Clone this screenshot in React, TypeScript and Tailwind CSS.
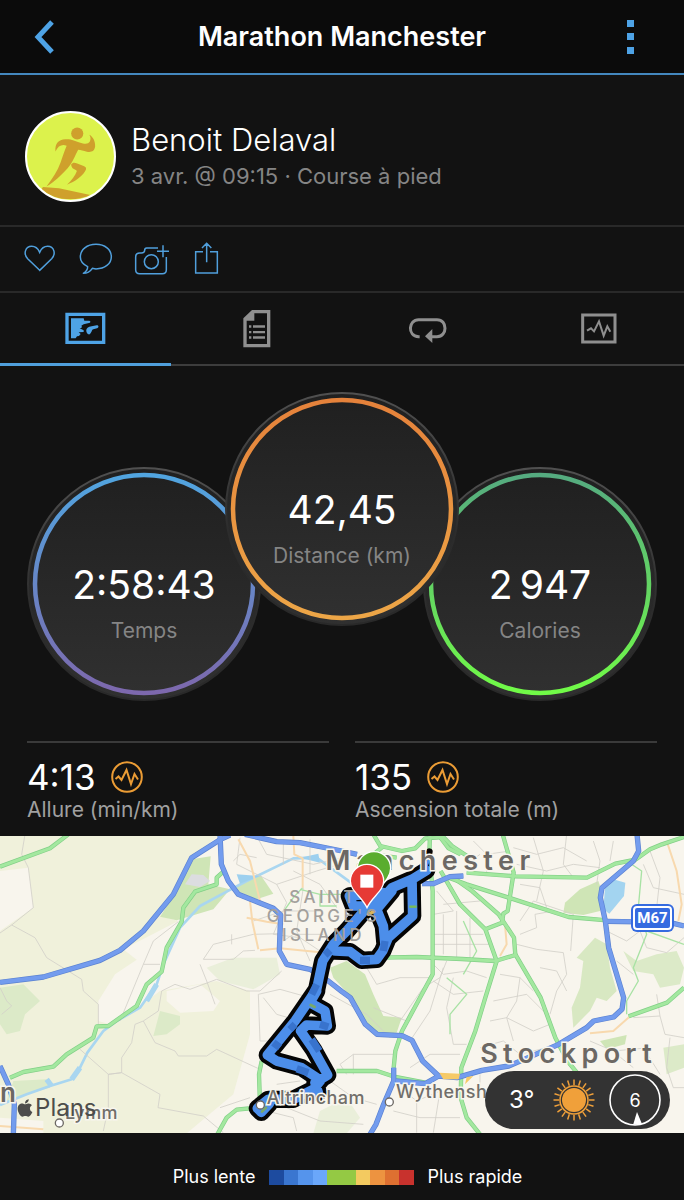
import React, { useState } from 'react';
import { FaApple } from 'react-icons/fa';

type Gauge = {
  id: string;
  value: string;
  label: string;
  from: string;
  to: string;
  place: string;
};

const gauges: Gauge[] = [
  { id: 'time', value: '2:58:43', label: 'Temps', from: '#51a5e0', to: '#7d68ad', place: 'mt-[75px]' },
  { id: 'distance', value: '42,45', label: 'Distance (km)', from: '#e5823b', to: '#eda647', place: 'z-10 -mx-[34px]' },
  { id: 'calories', value: '2\u202f947', label: 'Calories', from: '#55ab80', to: '#71fb47', place: 'mt-[75px]' },
];

const stats = [
  { value: '4:13', label: 'Allure (min/km)' },
  { value: '135', label: 'Ascension totale (m)' },
];

const paceColors = [
  'bg-[#1d4b9f]', 'bg-[#3a76d0]', 'bg-[#5594ec]', 'bg-[#6aa7fa]', 'bg-[#94c944]',
  'bg-[#94c944]', 'bg-[#f3ca60]', 'bg-[#ed9340]', 'bg-[#de7031]', 'bg-[#c8322d]',
];

const motorways = [
  'M0 444L130 428L300 378L360 348L430 290L520 180L575 70L660 16L690 2',
  'M660 0L664 90L685 140L715 180L820 222L842 242L838 350L860 390L930 405L985 440L1026 472L1051 490L1096 570L1131 600L1206 604L1236 618L1268 680L1316 725',
  'M735 0L830 22L900 25L1026 50L1071 60',
  'M1266 148L1301 148L1350 127L1390 125',
  'M1911 0L1916 50L1900 80L1806 160L1801 190L1816 260L1826 340L1871 490L1866 525L1841 548L1781 560L1760 580L1676 630L1526 695L1446 708L1371 730L1316 725L1276 748L1188 740',
  'M1821 261L2008 264L2052 275',
  'M1181 700L1181 740L1151 810L1128 870L1110 900',
  'M0 695L25 750L43 810L40 900',
];

const mainRoads = [
  'M0 97L150 42L205 0',
  'M30 730L70 713L160 697L200 660L280 610L290 576L325 575L410 515L440 450L485 412L500 340L545 262L550 220L585 172L650 150L650 130L672 110',
  'M785 680L777 720L780 810',
  'M770 820L710 826L680 850L652 900',
  'M1010 710L1131 710L1186 728L1276 745',
  'M1290 0L1288 60L1298 170L1298 420L1206 590L1186 650L1181 700',
  'M1140 370L1250 368L1386 374L1486 380L1546 362L1542 310L1496 240L1416 170L1360 130',
  'M1322 110L1380 210L1456 285L1490 380L1456 490L1426 590L1384 700L1382 790L1400 850L1440 900',
  'M1546 360L1622 490L1666 610L1702 680L1735 720',
  'M1456 285L1506 265L1510 238L1523 230L1541 115L1508 0',
  'M1346 130L1400 150L1526 190L1706 248L1821 258',
  'M1400 115L1546 126L1761 130L1846 88L1906 76L1950 45L1986 30L2052 8',
  'M1886 546L2001 505L2052 460',
  'M1120 0L1141 35L1206 50L1246 42L1276 12L1330 8L1356 35L1406 68',
  'M1150 36L1120 60L1190 70',
  'M1320 8L1346 42L1382 60',
];

const orangeRoads = [
  'M715 15L750 80L780 200L750 200L757 262L775 345',
  'M740 250L800 262L850 270',
  'M780 348L840 342L960 354',
  'M880 5L883 60L908 72L908 160',
  'M1500 365L1520 330L1515 270',
  'M2000 20L2030 110L2045 210L2035 260',
  'M1770 597L1840 590L1890 546',
  'M0 875L130 885',
];

const lanes = [
  'M75 0L65 60L85 100L100 220L35 272L0 296',
  'M35 272L105 310L140 370L245 435L250 470L295 510L295 575',
  'M0 460L20 500L35 515L5 540',
  'M535 262L460 320L430 390L360 560M430 390H480',
  'M430 560L405 570L395 625L365 670V715L325 720L240 645M325 720V820L310 890M325 720L365 715L480 780L474 820L610 845L670 895',
  'M430 560L475 530L485 470L525 450L570 465L650 435L740 470H780L845 410',
  'M430 560L465 625L525 650L535 665H620L650 645L780 705',
  'M610 375L640 330L760 300L840 298M610 375H700L730 350L765 348M600 390L620 440L645 510M695 330V300',
  'M775 480L780 620H830M775 480L840 465L930 490M790 490L830 540L900 560',
  'M720 10L710 90L830 150L950 110L1050 80M770 5L800 60L940 90L1030 70M830 150L860 205L820 300L900 310L960 350M700 80L720 60L770 70',
  'M850 20V90M930 15V120M880 110L960 150L1010 220M760 260L850 230L960 230M910 160L890 290L930 380M850 320L880 300L970 300',
  'M1040 720L1020 690L1060 660H1180M1060 660V720M1100 400L1130 450L1200 430H1290M1120 520L1220 560',
  'M830 750L900 740M660 820L750 790M800 830L880 850L890 890M860 820L960 860L1090 870M990 740L1060 790L1130 810',
  'M1310 170L1360 230L1300 240M1330 210L1440 200M1300 300H1450M1330 240V360M1370 230V370M1410 250V375M1300 330H1470',
  'M1300 390L1330 420L1400 410L1460 430M1340 380L1320 430L1270 460L1200 560M1360 430L1340 520L1360 630H1400M1300 440L1360 480L1450 470M1230 620L1290 530L1330 400',
  'M1500 420L1560 430L1600 470M1480 500L1580 480L1640 540M1470 560L1520 550L1600 590L1650 570M1440 640L1510 620L1560 660L1640 640M1560 430L1550 500L1520 550L1540 620',
  'M1560 300L1610 280L1605 240L1660 230M1550 330L1610 345L1690 355L1700 420L1670 470L1650 540M1560 260L1600 200L1720 240L1712 350M1620 400L1670 410L1700 470',
  'M1540 40L1610 60L1690 40L1760 80M1550 90L1640 110L1720 90L1800 100M1600 10L1630 110L1610 200M1700 0L1690 90L1720 130M1560 150L1620 160L1640 220M1420 20L1460 60L1530 50M1400 90L1440 60M1460 60V120',
  'M1780 20L1800 80L1790 150M1840 20L1830 80M1930 90L1960 160L2052 180M1950 50L1980 130L1970 220M1820 290L1880 320L1920 290L1940 340L2000 355L2052 310M1850 380L1900 420',
  'M1900 550L1980 545L1995 600L2052 610M1980 545L1970 480M2010 610L2000 700L2020 760H2052M1770 620L1840 650L1950 640M1930 640L1980 720M1850 660L1900 700',
  'M1200 760L1250 800L1320 770L1390 780M1180 830L1260 850L1380 850M1250 800V895M1320 770L1300 895M1440 720L1440 780M1230 700L1290 660L1380 660M1170 610L1100 540L990 480',
];

const minorGreen = [
  'M908 160L880 190L855 225',
  'M900 165L960 180L1026 180M960 180V215H1010',
  'M1340 430L1400 480L1350 540L1350 600M1390 260L1430 350L1390 420',
  'M1880 80L1925 110L1915 220L1940 300L1900 400L1915 440L1880 500V540',
  'M1940 290L2052 330',
];

const route =
  'M1280 108L1236 135L1176 160L1145 195L1105 215L1040 290L1000 330L968 380L950 465L885 560L802 662L830 680L905 700L962 738L940 765L880 795L805 795L772 822L784 834L808 808' +
  'M1236 135L1238 245L1165 310L1148 350L1130 375L1085 378L1050 352L1005 350' +
  'M1176 170L1130 225L1150 275L1155 330M1110 215L1060 215L1048 185L1100 180L1150 175' +
  'M950 470L930 505L975 530L982 575L920 572L902 590L940 645L983 722L945 745L955 775';

const labelHalo = '[paint-order:stroke_fill] [-webkit-text-stroke:3px_#f8f6ee]';

function RunnerAvatar() {
  return (
    <svg viewBox="30 32 272 272" className="size-[91px] shrink-0 rounded-full border-2 border-white bg-[#dcf24c]" role="img" aria-label="Benoit Delaval">
      <g fill="#cfa02c">
        <circle cx="187" cy="96" r="19" />
        <path d="M119 152C117 128 128 115 150 114C170 113 181 120 194 124C210 129 221 130 226 122C231 112 228 106 225 100C236 106 244 120 243 137C241 152 230 156 217 153C207 151 198 147 190 147C180 165 173 187 157 205C138 226 115 248 91 262C111 235 125 214 135 187C141 169 147 150 154 134C140 128 127 134 119 152Z" />
        <path d="M168 193C173 186 179 187 187 190L207 198C216 202 217 207 211 215C201 231 181 246 155 256C169 242 181 228 186 213C181 207 169 208 168 193Z" />
        <path d="M80 263L130 267L228 288C190 306 120 310 75 270Z" />
      </g>
    </svg>
  );
}

function PulseIcon() {
  return (
    <svg viewBox="0 0 32 32" className="size-8" fill="none" stroke="#eb9c35" aria-hidden="true">
      <circle cx="16" cy="16" r="14.8" strokeWidth="2" />
      <path d="M4.500 18L7.500 15.500L10.500 19L15.500 9L20 23L23.500 13L27 18.500" strokeWidth="2" strokeLinejoin="miter" />
    </svg>
  );
}

const actions = [
  {
    label: "J'aime",
    icon: (
      <svg viewBox="60 42 120 120" className="size-10" fill="none" stroke="currentColor" strokeWidth="4.500">
        <path d="M119 136L83 101C69 86 76 64 95 64C108 64 115 73 119 82C123 73 130 64 143 64C162 64 169 86 155 101Z" />
      </svg>
    ),
  },
  {
    label: 'Commenter',
    icon: (
      <svg viewBox="228 42 120 120" className="size-10" fill="none" stroke="currentColor" strokeWidth="4.500" strokeLinejoin="round">
        <path d="M263 125C249 118 241 108 241 96C241 74 261 58 288 58C315 58 334 74 334 95C334 117 314 131 288 132L277 130C271 139 263 145 250 145C259 139 263 133 263 125Z" />
      </svg>
    ),
  },
  {
    label: 'Ajouter une photo',
    icon: (
      <svg viewBox="396 42 120 120" className="size-10" fill="none" stroke="currentColor" strokeWidth="4.500">
        <path d="M474 69H440C436 69 434 73 434 76C434 82 431 84 424 84H419C411 84 407 89 407 96V134C407 142 412 146 419 146H487C495 146 499 141 499 134V96" />
        <circle cx="454" cy="110" r="21" />
        <path d="M489 61V97M471 79H507" />
      </svg>
    ),
  },
  {
    label: 'Partager',
    icon: (
      <svg viewBox="564 42 120 120" className="size-10" fill="none" stroke="currentColor" strokeWidth="4.500">
        <path d="M609 80H587V144H652V80H630M620 112V56M606 69L620 55L634 69" />
      </svg>
    ),
  },
];

const tabs = [
  {
    label: 'Carte',
    icon: (
      <svg viewBox="197 248 120 120" className="size-10 overflow-visible" fill="currentColor">
        <path fillRule="evenodd" d="M195 262H315V356H195ZM205 272V346H305V272Z" />
        <path d="M212 279H250L252 286H267C272 287 271 292 266 293L250 297L243 301C247 305 244 308 238 309L250 315V320L235 321L241 326L236 332L230 333L226 339H212Z" />
        <path d="M258 318C257 309 264 304 274 303L289 300C296 300 296 307 290 309L279 312C273 314 275 322 268 327C261 328 259 323 258 318Z" />
      </svg>
    ),
  },
  {
    label: 'Statistiques',
    icon: (
      <svg viewBox="710 248 120 120" className="size-10" fill="currentColor">
        <path fillRule="evenodd" d="M755 254H810V366H729V279ZM762 264V286H739V356H800V264Z" />
        <path d="M746 300H753V307H746ZM758 300H794V307H758ZM746 317H753V324H746ZM758 317H794V324H758ZM746 333H753V340H746ZM758 333H794V340H758Z" />
      </svg>
    ),
  },
  {
    label: 'Circuits',
    icon: (
      <svg viewBox="197 248 120 120" className="size-10" fill="none" stroke="currentColor" strokeWidth="9">
        <path d="M232 334H229C194 332 198 283 229 283H284C316 283 316 334 284 334H265" />
        <path d="M248 333L270 311V353Z" fill="currentColor" stroke="none" />
      </svg>
    ),
  },
  {
    label: 'Graphiques',
    icon: (
      <svg viewBox="710 248 120 120" className="size-10" fill="none" stroke="currentColor">
        <path d="M721 269H818V350H721Z" strokeWidth="9" />
        <path d="M734 316L746 309L755 318L770 288L784 331L795 303L804 319" strokeWidth="6" />
      </svg>
    ),
  },
];

function RouteMap() {
  return (
    <section aria-label="Carte du parcours" className="relative overflow-hidden bg-[#f8f5ed]">
      {/* Terrain, roads and track */}
      <svg viewBox="0 5 2052 892" className="block h-auto w-full" aria-hidden="true">
        <path d="M0 0H660L575 70L480 245L535 260L370 345L440 400L360 560L480 470L650 440L750 470L750 600L700 780L560 897H0Z" fill="#f0f1db" />
        <path d="M0 110L85 100L100 220L0 290ZM500 470L600 450L660 500L640 530L540 535L500 500ZM345 420L480 330L500 280L540 262L500 400L430 510L330 570L295 560V500ZM0 850L130 860V897H0Z" fill="#f8f5ed" />
        <g fill="#cfe5b6">
          <path d="M575 75L632 66L625 150L690 165L640 225L590 240L530 258L480 247L530 170Z" />
          <path d="M735 140L780 120L820 178L770 195L700 165Z" />
          <path d="M990 400L1040 380L1095 420L1120 480L1150 545L1205 550L1190 595L1130 600L1090 560L1055 490L1000 430Z" />
          <path d="M1695 205L1740 165L1795 140L1805 170L1800 230L1750 242L1690 235Z" />
          <path d="M1785 310L1820 330L1830 400L1850 470L1820 500L1790 490L1770 530L1720 580L1715 520L1740 460L1750 380L1730 370Z" opacity=".8" />
          <path d="M1800 620L1880 602L1875 630L1820 645Z" />
        </g>
        <g fill="#dceac8">
          <path d="M480 530L540 545L540 570L500 600L460 605Z" />
          <path d="M0 460L70 450L120 500L75 540L60 590L20 600L0 570Z" />
          <path d="M40 740L140 735L150 760L80 780L20 800Z" />
          <path d="M620 400L700 370L830 370L840 420L760 465L660 440Z" opacity=".5" />
          <path d="M1870 350L1910 380L1970 360L2030 350L2052 400L2040 450L1980 460L1960 420L1900 410Z" />
          <path d="M1990 640L2052 630V700L2000 720Z" />
          <path d="M960 830L1040 790L1080 850L1040 897H940Z" opacity=".5" />
        </g>
        <path d="M555 150L575 120L610 122L630 140L600 158Z" fill="#dcdde0" />
        <path d="M1816 148L1845 136L1876 145L1872 185L1828 238L1810 225Z" fill="#a3d4f0" />
        <g fill="none" stroke="#a9d6f0" strokeLinejoin="round">
          <path d="M0 812L80 780L150 755L215 735L240 700L262 655L310 590L350 560L420 520L470 450L490 390L540 280L600 215L680 172L740 140L880 72L950 70L1060 150" strokeWidth="8" />
          <path d="M140 735L155 755M440 500L470 450M215 735L240 700" strokeWidth="16" />
        </g>
        <path d="M710 120L780 125L720 148ZM900 70L955 58L960 85Z" fill="#9dd0ef" />
        <g fill="none" strokeLinejoin="round">
          {lanes.map(d => <path key={d} d={d} stroke="#d3d0c9" strokeWidth="2.500" />)}
          {minorGreen.map(d => <path key={d} d={d} stroke="#a8e2a4" strokeWidth="4" />)}
          {orangeRoads.map(d => <path key={d} d={d} stroke="#f8d9ae" strokeWidth="6" />)}
          {mainRoads.map(d => <path key={d} d={d} stroke="#82cf87" strokeWidth="13" />)}
          {mainRoads.map(d => <path key={d} d={d} stroke="#a3e89f" strokeWidth="9" />)}
          {motorways.map(d => <path key={d} d={d} stroke="#5b82d0" strokeWidth="16" />)}
          {motorways.map(d => <path key={d} d={d} stroke="#739cee" strokeWidth="12" />)}
        </g>
        <path d="M1318 715L1380 718L1376 735H1330ZM1395 750L1420 725L1400 728Z" fill="#f6ca67" />
        <g fill="none" strokeLinejoin="round" strokeLinecap="round">
          <path d="M1288 52L1280 85L1266 112" stroke="#050505" strokeWidth="20" />
          <path d={route} stroke="#050505" strokeWidth="52" />
          <path d={route} stroke="#4c8eea" strokeWidth="29" />
          <path d="M1284 80L1272 112" stroke="#4c8eea" strokeWidth="10" />
          <path d="M975 362L990 348M935 480L950 450M870 570L885 585M820 625L840 640M935 615L958 650M960 570L985 578M1080 378L1110 378M1155 320L1150 350M890 703L925 715" stroke="#3873cd" strokeWidth="22" strokeLinecap="butt" />
          <path d="M1228 217H1250" stroke="#79bd55" strokeWidth="7" strokeLinecap="butt" />
          <path d="M932 512L944 518M786 832L798 820" stroke="#79a969" strokeWidth="8" />
          <path d="M1105 240L1120 232" stroke="#d9b55c" strokeWidth="10" />
        </g>
      </svg>

      {/* Place names */}
      <span className={`absolute left-[47.6%] top-[3%] text-[27px] leading-8 font-semibold tracking-[0.2em] text-[#6c6864] ${labelHalo}`}>Manchester</span>
      <span className={`absolute left-[70.2%] top-[68%] text-[27px] leading-8 font-semibold tracking-[0.2em] text-[#6c6864] ${labelHalo}`}>Stockport</span>
      <p className="absolute left-[39%] top-[17.500%] text-center text-[17px] leading-[19px] font-medium tracking-[0.2em] text-[#a3a09c]">
        SAINT<br />GEORGE'S<br />ISLAND
      </p>
      <span className={`absolute left-[39%] top-[84%] text-[18px] leading-6 font-medium tracking-wide text-[#716e6a] ${labelHalo}`}>Altrincham</span>
      <span className={`absolute left-[57.900%] top-[82%] text-[18px] leading-6 font-medium tracking-wide text-[#716e6a] ${labelHalo}`}>Wythensh</span>
      <span className={`absolute left-[9.500%] top-[89%] text-[18px] leading-6 font-medium tracking-wide text-[#716e6a] ${labelHalo}`}>Lymm</span>
      <span className={`absolute left-0 top-[81%] text-[26px] leading-8 font-semibold text-[#6c6864] ${labelHalo}`}>n</span>
      <span className="absolute left-[2.200%] top-[86%] flex items-center text-[24px] leading-8 text-[#4d4d4b]">
        <FaApple size={20} aria-hidden="true" />Plans
      </span>
      <span className="absolute left-[92.300%] top-[23%] rounded-md bg-[#356be0] p-[2px]">
        <span className="block rounded border-2 border-white px-[2px] text-[15px] leading-5 font-bold text-white font-['Roboto',sans-serif]">M67</span>
      </span>

      {/* Town markers and start / finish pins */}
      <svg viewBox="0 5 2052 892" className="absolute inset-0 h-auto w-full" aria-hidden="true">
        <g fill="#fff" stroke="#6c6864" strokeWidth="4">
          <circle cx="781" cy="812" r="12" />
          <circle cx="1168" cy="803" r="12" />
          <circle cx="178" cy="866" r="12" />
        </g>
        <g stroke="#fff" strokeWidth="4">
          <path d="M1123 182C1100 150 1072 130 1072 102A50 50 0 0 1 1172 102C1172 130 1146 150 1123 182Z" fill="#5aad2f" />
          <path d="M1101 220C1085 186 1051 170 1051 140A50 50 0 0 1 1151 140C1151 170 1117 186 1101 220Z" fill="#e63a35" />
        </g>
        <path d="M1081 121H1120V160H1081Z" fill="#fff" />
      </svg>

      {/* Weather */}
      <div className="absolute right-[14px] bottom-1 flex h-[58px] w-[185px] items-center justify-between rounded-full bg-[#333333] pr-[9px] pl-6 text-white">
        <span className="text-[24px]">3°</span>
        <svg viewBox="-22 -22 44 44" className="ml-1 size-[44px]" role="img" aria-label="Ensoleillé">
          <circle r="12" fill="#f0a03a" />
          <circle r="14" fill="none" stroke="#f0a03a" strokeWidth="1.500" />
          {Array.from({ length: 20 }, (_, i) => (
            <path key={i} d="M0 -15V-20.500" stroke="#f0a03a" strokeWidth="1.500" transform={`rotate(${i * 18})`} />
          ))}
        </svg>
        <div className="relative flex size-[52px] items-center justify-center">
          <svg viewBox="0 0 52 52" className="absolute inset-0" aria-hidden="true">
            <circle cx="26" cy="26" r="25" fill="none" stroke="#fff" strokeWidth="1.600" />
            <path d="M28 38L33 50L24 51Z" fill="#fff" />
          </svg>
          <span className="text-[18px]">6</span>
        </div>
      </div>
    </section>
  );
}

export default function App() {
  const [activeTab, setActiveTab] = useState(0);

  return (
    <div className="min-h-screen bg-[#121212] text-white font-['Inter','Liberation_Sans',sans-serif]">
      {/* Header */}
      <header className="flex h-[75px] items-center justify-between border-b-2 border-[#4387be] bg-[#0b0b0b]">
        <button aria-label="Retour" className="flex w-[88px] justify-center text-[#4ea3e6]">
          <svg viewBox="0 0 24 36" className="h-9 w-6" fill="none" stroke="currentColor" strokeWidth="5">
            <path d="M20 3L6 18L20 33" />
          </svg>
        </button>
        <h1 className="text-[27px] leading-8 font-semibold">Marathon Manchester</h1>
        <button aria-label="Plus d'options" className="flex w-[88px] justify-center pr-[18px] text-[#4ea3e6]">
          <svg viewBox="0 0 7 34" className="h-[34px] w-[7px]" fill="currentColor">
            <path d="M0 0H7V7H0ZM0 13H7V20H0ZM0 27H7V34H0Z" />
          </svg>
        </button>
      </header>

      {/* Athlete */}
      <section className="flex h-[152px] items-center gap-[15px] border-b-2 border-[#292929] px-[25px] pt-3">
        <RunnerAvatar />
        <div>
          <h2 className="text-[31px] leading-10 font-light">Benoit Delaval</h2>
          <p className="text-[22px] leading-8 text-[#858585]">3 avr. @ 09:15 · Course à pied</p>
        </div>
      </section>

      {/* Social actions */}
      <div className="flex h-[66px] items-center border-b-2 border-[#292929] px-3">
        {actions.map(action => (
          <button key={action.label} aria-label={action.label} className="flex w-14 justify-center text-[#509fdc]">
            {action.icon}
          </button>
        ))}
      </div>

      {/* Tabs */}
      <nav role="tablist" className="flex border-b-2 border-[#3d3d3d]">
        {tabs.map((tab, i) => (
          <button
            key={tab.label}
            role="tab"
            aria-label={tab.label}
            aria-selected={activeTab === i}
            onClick={() => setActiveTab(i)}
            className={`-mb-[2px] flex h-[73px] flex-1 items-center justify-center border-b-3 ${activeTab === i ? 'border-[#509fdc] text-[#4ea3e6]' : 'border-transparent text-[#8f8f8f]'}`}
          >
            {tab.icon}
          </button>
        ))}
      </nav>

      {/* Gauges */}
      <section className="flex justify-center pt-[26px]">
        {gauges.map(g => (
          <div key={g.id} className={`relative flex size-[232px] shrink-0 flex-col items-center ${g.place}`}>
            <svg viewBox="0 0 232 232" className="absolute inset-0 overflow-visible" aria-hidden="true">
              <defs>
                <linearGradient id={`${g.id}-ring`} x1="0" y1="0" x2="0" y2="1">
                  <stop offset="0" stopColor={g.from} />
                  <stop offset="1" stopColor={g.to} />
                </linearGradient>
                <linearGradient id={`${g.id}-rim`} x1="0" y1="0" x2="0" y2="1">
                  <stop offset="0" stopColor="#505050" />
                  <stop offset="0.6" stopColor="#2c2c2c" />
                  <stop offset="1" stopColor="#292929" />
                </linearGradient>
                <linearGradient id={`${g.id}-face`} x1="0" y1="0" x2="0" y2="1">
                  <stop offset="0" stopColor="#202020" />
                  <stop offset="1" stopColor="#303030" />
                </linearGradient>
              </defs>
              <circle cx="116" cy="117" r="116" fill={`url(#${g.id}-face)`} stroke={`url(#${g.id}-rim)`} strokeWidth="2" />
              <circle cx="116" cy="117" r="109" fill={`url(#${g.id}-face)`} stroke={`url(#${g.id}-ring)`} strokeWidth="4.500" />
            </svg>
            <span className="relative mt-[94px] text-[39px] leading-[48px]">{g.value}</span>
            <span className="relative mt-2 text-[21px] leading-[28px] text-[#858585]">{g.label}</span>
          </div>
        ))}
      </section>

      {/* Key figures */}
      <section className="mt-[42px] grid grid-cols-2 gap-[26px] px-[27px]">
        {stats.map(stat => (
          <div key={stat.label} className="border-t-2 border-[#3a3a3a] pt-[14px] pb-[13px]">
            <div className="flex items-center gap-[15px]">
              <span className="text-[35px] leading-[40px]">{stat.value}</span>
              <PulseIcon />
            </div>
            <p className="text-[21px] leading-[26px] text-[#a0a0a0]">{stat.label}</p>
          </div>
        ))}
      </section>

      <RouteMap />

      {/* Pace legend */}
      <footer className="flex items-center justify-center gap-[14px] pt-8 pb-2 pl-[11px] text-[18px] leading-6">
        <span>Plus lente</span>
        <div className="flex h-[15px] w-36">
          {paceColors.map((color, i) => <div key={i} className={`flex-1 ${color}`} />)}
        </div>
        <span>Plus rapide</span>
      </footer>
    </div>
  );
}
